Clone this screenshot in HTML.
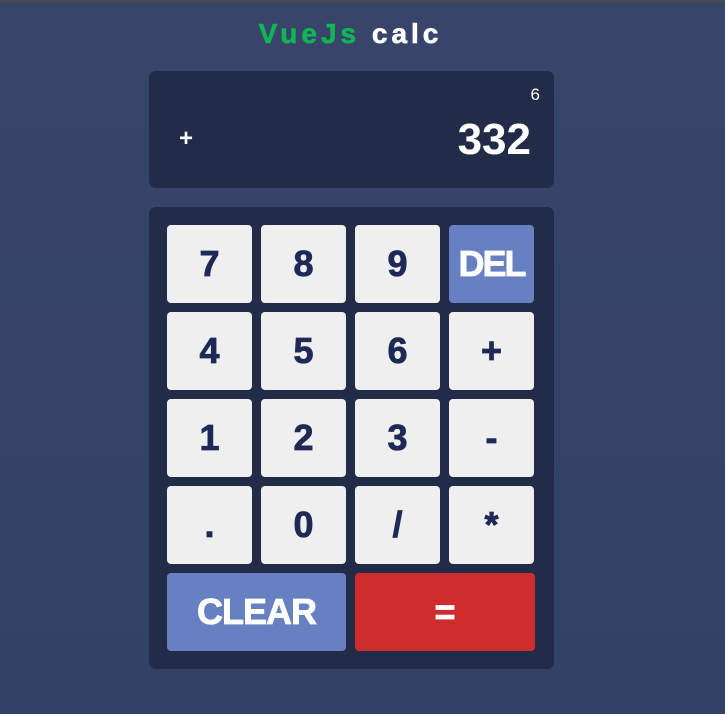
<!DOCTYPE html>
<html><head><meta charset="utf-8"><style>
*{margin:0;padding:0;box-sizing:border-box}
html,body{width:725px;height:714px;overflow:hidden}
body{background:linear-gradient(#384469,#344167);font-family:"Liberation Sans",Arial,sans-serif;position:relative}
.topb{position:absolute;left:0;top:0;width:725px;height:2px;background:#4a4a4a}
h1{position:absolute;top:17px;left:-12px;width:725px;text-align:center;font-size:28px;font-weight:bold;letter-spacing:4px;color:#fff;line-height:34px;-webkit-text-stroke:0.6px #fff}
h1 span{color:#10b556;-webkit-text-stroke:0.6px #10b556}
.disp{position:absolute;left:149px;top:71px;width:405px;height:117px;background:#222b48;border-radius:7px;color:#fff}
.prev{position:absolute;right:14px;top:14px;font-size:17px}
.op{position:absolute;left:30px;top:54px;font-size:24px;font-weight:bold}
.cur{position:absolute;right:23px;top:44px;font-size:44px;font-weight:bold}
.pad{position:absolute;left:149px;top:207px;width:405px;height:462px;background:#222b48;border-radius:7px}
.b{position:absolute;width:85px;height:78px;background:#efefef;border-radius:4px;color:#1e2a55;font-size:36px;font-weight:bold;display:flex;align-items:center;justify-content:center;-webkit-text-stroke:0.8px #1e2a55}
.blue{background:#6780c2;color:#fff;letter-spacing:-2px;-webkit-text-stroke:0.8px #fff}
.red{background:#cf2c2d;color:#fff;-webkit-text-stroke:0.8px #fff}
</style></head><body>
<div class="topb"></div>
<h1><span>VueJs</span> calc</h1>
<div class="disp"><div class="prev">6</div><div class="op">+</div><div class="cur">332</div></div>
<div class="pad">
<div class="b" style="left:18px;top:18px">7</div>
<div class="b" style="left:112px;top:18px">8</div>
<div class="b" style="left:206px;top:18px">9</div>
<div class="b blue" style="left:300px;top:18px">DEL</div>
<div class="b" style="left:18px;top:105px">4</div>
<div class="b" style="left:112px;top:105px">5</div>
<div class="b" style="left:206px;top:105px">6</div>
<div class="b" style="left:300px;top:105px">+</div>
<div class="b" style="left:18px;top:192px">1</div>
<div class="b" style="left:112px;top:192px">2</div>
<div class="b" style="left:206px;top:192px">3</div>
<div class="b" style="left:300px;top:192px">-</div>
<div class="b" style="left:18px;top:279px">.</div>
<div class="b" style="left:112px;top:279px">0</div>
<div class="b" style="left:206px;top:279px">/</div>
<div class="b" style="left:300px;top:279px">*</div>
<div class="b blue" style="left:18px;top:366px;width:179px;letter-spacing:-1px">CLEAR</div>
<div class="b red" style="left:206px;top:366px;width:180px">=</div>
</div>
</body></html>
